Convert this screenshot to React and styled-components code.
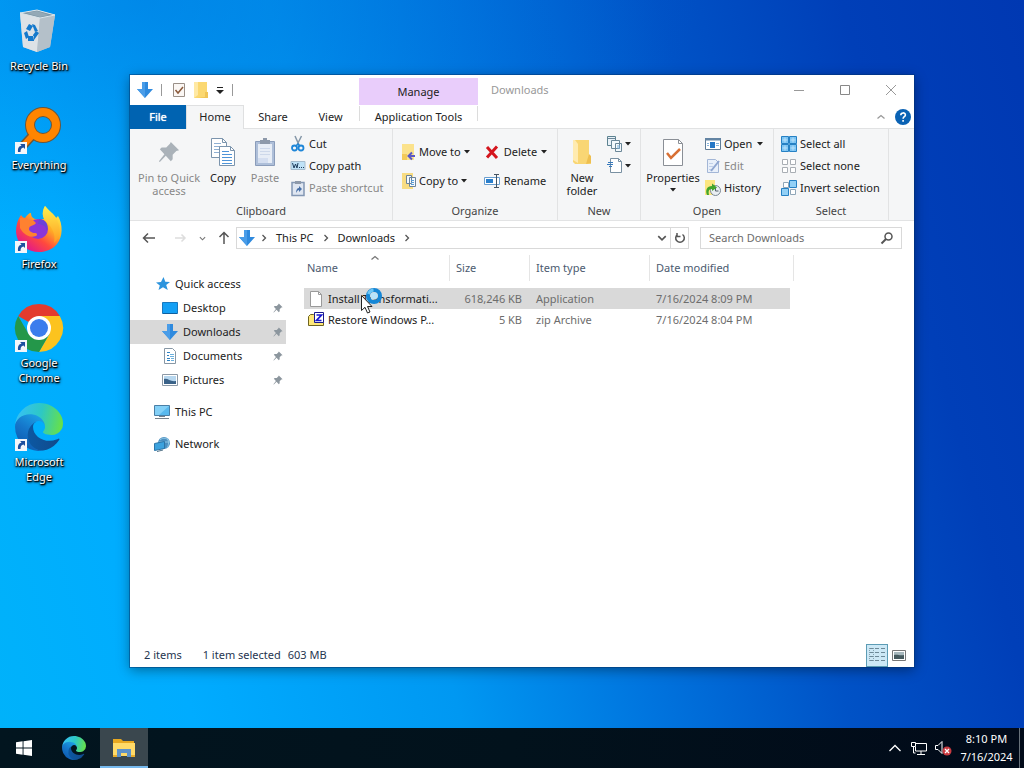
import React from "react"

import styled, { createGlobalStyle } from "styled-components"

const GlobalStyle = createGlobalStyle`
  * {
    box-sizing: border-box;
  }

  body {
    margin: 0;
    overflow: hidden;
    font-family: "Noto Sans", "Open Sans", sans-serif;
    font-size: 11px;
    line-height: 16px;
    color: #222;
  }

  button, input {
    font: inherit;
    color: inherit;
    border: 0;
    padding: 0;
    background: none;
  }

  a {
    color: inherit;
    text-decoration: none;
  }

  svg {
    display: block;
    flex-shrink: 0;
    overflow: visible;
  }
`

/* ---------- desktop ---------- */

const Screen = styled.div`
  display: flex;
  flex-direction: column;
  height: 100vh;
`

const Desktop = styled.main`
  position: relative;
  flex: 1;
  min-height: 0;
  background:
    radial-gradient(ellipse 560px 240px at 14% 0%, rgba(0, 100, 210, 0.4), rgba(0, 100, 210, 0) 100%),
    linear-gradient(75deg, #00b2fa 0%, #00acff 16%, #0098f2 38%, #0074de 54%, #0052c6 70%, #003fb8 85%, #0038b2 100%);
`

const Shortcuts = styled.nav`
  display: flex;
  flex-direction: column;
  width: 78px;
  padding-top: 7px;
`

const Shortcut = styled.a`
  display: flex;
  flex-direction: column;
  align-items: center;
  gap: 3px;
  height: 99px;
  line-height: 15px;
  text-align: center;
  color: #fff;
  text-shadow: 1px 1px 1px #000, 0 1px 2px #000, 1px 1px 3px #000;
`

const ShortcutLabel = styled.span`
  width: 68px;
`

/* ---------- window ---------- */

const Window = styled.section`
  position: absolute;
  top: 75px;
  right: 110px;
  bottom: 61px;
  left: 130px;
  display: flex;
  flex-direction: column;
  background: #fff;
  outline: 1px solid rgba(0, 50, 110, 0.45);
  box-shadow: 0 3px 12px rgba(0, 0, 0, 0.4);
`

const TitleBar = styled.header`
  display: flex;
  height: 30px;
`

const QuickTools = styled.div`
  display: flex;
  align-items: center;
  gap: 8px;
  width: 229px;
  padding-left: 7px;
`

const ToolDivider = styled.span`
  width: 1px;
  height: 12px;
  background: #999;
`

const ContextTab = styled.div`
  width: 119px;
  margin-top: 3px;
  line-height: 27px;
  text-align: center;
  background: #e9cdfb;
`

const WindowTitle = styled.h1`
  flex: 1;
  margin: 0;
  padding-left: 13px;
  font-size: 11px;
  font-weight: 400;
  line-height: 30px;
  color: #999;
`

const WindowButton = styled.button`
  display: flex;
  align-items: center;
  justify-content: center;
  width: 46px;
  height: 29px;
`

const Tabs = styled.div`
  display: flex;
  height: 24px;
  border-bottom: 1px solid #e1e2e3;
`

const Tab = styled.button`
  width: ${props => props.$width || 56}px;
  height: 24px;
  padding-bottom: 2px;
  border: 1px solid transparent;
  border-bottom: 0;

  ${props => props.$file && `
    color: #fff;
    background: #0063b1;
    text-shadow: 0 0 1px #fff;
  `}
  ${props => props.$active && `
    border-color: #dfe0e1;
    background: #f5f6f7;
  `}
  ${props => props.$context && `
    border-image: linear-gradient(#dcdcdc 16px, transparent 16px) 0 1;
  `}
`

const TabsEnd = styled.div`
  display: flex;
  align-items: center;
  gap: 10px;
  margin-left: auto;
  padding-right: 3px;
`

/* ---------- ribbon ---------- */

const Ribbon = styled.div`
  display: flex;
  height: 92px;
  background: #f5f6f7;
  border-bottom: 1px solid #e2e3e4;
`

const Group = styled.section`
  display: flex;
  flex-direction: column;
  width: ${props => props.$width}px;
  border-right: 1px solid #e2e3e4;
`

const GroupBody = styled.div`
  display: flex;
  flex: 1;
  padding: 4px 0 0 ${props => props.$pad || 6}px;
`

const GroupTitle = styled.h2`
  margin: 0;
  padding-bottom: 1px;
  font-size: 11px;
  font-weight: 400;
  line-height: 17px;
  text-align: center;
  color: #444;
`

const BigButton = styled.button`
  display: flex;
  flex-direction: column;
  align-items: center;
  width: ${props => props.$width}px;
  height: 66px;
  line-height: 13px;
  color: ${props => (props.$off ? "#888" : "#222")};
`

const BigIcon = styled.span`
  display: flex;
  align-items: center;
  justify-content: center;
  height: 38px;
`

const Stack = styled.div`
  display: flex;
  flex-direction: column;
  gap: ${props => props.$gap || 0}px;
  padding-top: ${props => props.$top || 0}px;
  padding-left: ${props => props.$left || 0}px;
`

const SmallButton = styled.button`
  display: flex;
  align-items: center;
  gap: ${props => props.$gap || 3}px;
  height: 22px;
  white-space: nowrap;
  color: ${props => (props.$off ? "#888" : "#222")};
`

/* ---------- address row ---------- */

const AddressRow = styled.div`
  display: flex;
  align-items: center;
  height: 34px;
  padding-right: 12px;
`

const NavButton = styled.button`
  display: flex;
  align-items: center;
  justify-content: center;
  width: ${props => props.$width}px;
  height: 22px;
`

const AddressBox = styled.div`
  display: flex;
  align-items: center;
  flex: 1;
  height: 22px;
  padding-left: 2px;
  border: 1px solid #d9d9d9;
`

const Crumb = styled.a`
  margin: 0 8px;
`

const Refresh = styled(NavButton)`
  border-left: 1px solid #d9d9d9;
  height: 20px;
`

const SearchBox = styled.label`
  display: flex;
  align-items: center;
  width: 202px;
  height: 22px;
  margin-left: 11px;
  padding: 0 8px;
  border: 1px solid #d9d9d9;

  input {
    flex: 1;
    min-width: 0;
    outline: 0;
  }

  input::placeholder {
    color: #6d6d6d;
    opacity: 1;
  }
`

/* ---------- body ---------- */

const Body = styled.div`
  display: flex;
  flex: 1;
  min-height: 0;
`

const Tree = styled.nav`
  width: 156px;
  padding-top: 17px;
`

const TreeItem = styled.a`
  display: flex;
  align-items: center;
  gap: 5px;
  height: 24px;
  margin-top: ${props => (props.$spaced ? 8 : 0)}px;
  padding: 0 3px 0 ${props => (props.$nested ? 32 : 24)}px;
  background: ${props => (props.$current ? "#d9d9d9" : "none")};

  span {
    flex: 1;
  }
`

const Files = styled.div`
  flex: 1;
  padding-left: 18px;
`

const FileTable = styled.table`
  table-layout: fixed;
  width: 490px;
  border-collapse: separate;
  border-spacing: 0;

  th {
    position: relative;
    height: 26px;
    padding: 0 6px;
    border-right: 1px solid #e5e5e5;
    font-weight: 400;
    text-align: left;
    color: #4c5b70;
  }

  th:first-child {
    padding-left: 3px;
  }

  tbody::before {
    content: "";
    display: block;
    height: 7px;
  }

  td {
    height: 21px;
    padding: 0 6px;
    white-space: nowrap;
    color: #6d6d6d;
  }

  td:first-child {
    padding-left: 4px;
    color: #222;
  }

  td:nth-child(2) {
    padding-right: 8px;
    text-align: right;
  }

  tr[aria-selected="true"] td:not(:last-child) {
    background: #d9d9d9;
  }
`

const SortMark = styled.span`
  position: absolute;
  top: -1px;
  left: 67px;
`

const FileName = styled.span`
  display: flex;
  align-items: center;
  gap: 4px;
`

const StatusBar = styled.footer`
  display: flex;
  align-items: center;
  height: 24px;
  padding: 0 4px 0 14px;
  color: #26354f;
`

const StatusText = styled.span`
  margin-right: ${props => props.$gap}px;
`

const ViewButtons = styled.div`
  display: flex;
  margin-left: auto;
`

const ViewButton = styled.button`
  display: flex;
  align-items: center;
  justify-content: center;
  width: 22px;
  height: 23px;
  border: 1px solid ${props => (props.$active ? "#5c9cb5" : "transparent")};
  background: ${props => (props.$active ? "#cce8f6" : "none")};
`

const Pointer = styled.div`
  position: absolute;
  top: 286px;
  left: 360px;
`

/* ---------- taskbar ---------- */

const Taskbar = styled.footer`
  display: flex;
  height: 40px;
  color: #fff;
  background: linear-gradient(90deg, #02151f, #02121c 50%, #010a19);
`

const TaskButton = styled.button`
  display: flex;
  align-items: center;
  justify-content: center;
  width: ${props => props.$width || 48}px;
  height: 40px;
  border-bottom: 2px solid ${props => (props.$open ? "#76b9ed" : "transparent")};
  border-top: 2px solid transparent;
  background: ${props => (props.$open ? "#3a474e" : "none")};
`

const Tray = styled.div`
  display: flex;
  align-items: center;
  margin-left: auto;
  padding-right: 4px;
`

const Clock = styled.time`
  width: 66px;
  height: 40px;
  padding-top: 2px;
  border-right: 1px solid #68717a;
  line-height: 18px;
  text-align: center;
`

/* ---------- icons ---------- */

const Svg = ({ w = 16, h = w, box, children }) => (
  <svg width={w} height={h} viewBox={box || `0 0 ${w} ${h}`} fill="none" aria-hidden="true">
    {children}
  </svg>
)

const LinkBadge = () => (
  <g>
    <path d="M0 36h12v12H0z" fill="#f4f6fa" />
    <path d="M3 46c-.4-4 1-6 3.500-6.200L5.200 38H10v5L8.500 41.600C6.500 42 5.500 43 5.500 46z" fill="#1d4f9f" />
  </g>
)

const BinIcon = () => (
  <Svg w={48}>
    <path d="M5 6 22 3l18 5-5 32-13 5-14-5z" fill="#c3cdd4" />
    <path d="M5 6 25 10l-3 35-14-5z" fill="#dde2e6" />
    <path d="m25 10 15-2-5 32-13 5z" fill="#b4c0c9" />
    <path d="M5 6 22 3l18 5-15 3z" fill="#7d95a5" stroke="#dbe6ec" />
    <path d="m11 6 11-2 12 4-9 2z" fill="#94a9b6" />
    <path d="m11 22 3-5 4 2-3 5zM17 17l3 1 3 6-3 1zM9 26l3-2 2 6-3 2zM13 34v-5h6v5zM19 33l5-7-3-2-3 4z" fill="#1479cc" />
  </Svg>
)

const EverythingIcon = () => (
  <Svg w={48}>
    <path d="m17 30-11 12" stroke="#6f5638" strokeWidth="9" />
    <circle cx="28" cy="19" r="13" stroke="#6f5638" strokeWidth="10" />
    <path d="M18 29 6 42" stroke="#ff7f00" strokeWidth="6" />
    <circle cx="28" cy="19" r="13" stroke="#ff8500" strokeWidth="8" />
    <LinkBadge />
  </Svg>
)

const FirefoxIcon = () => (
  <Svg w={48}>
    <defs>
      <linearGradient id="fox" x1="40" y1="6" x2="10" y2="44" gradientUnits="userSpaceOnUse">
        <stop offset="0" stopColor="#ffe94a" />
        <stop offset="0.35" stopColor="#ffae25" />
        <stop offset="0.65" stopColor="#ff4a3d" />
        <stop offset="1" stopColor="#e01590" />
      </linearGradient>
      <linearGradient id="flame" x1="0" y1="0" x2="0" y2="1">
        <stop offset="0" stopColor="#fff04e" />
        <stop offset="1" stopColor="#ff9b20" />
      </linearGradient>
    </defs>
    <path d="M6 10c1 2 3 3 4 3 2-3 4-5 6-5 0 3 1 5 4 6h10c-3-3-3-8 0-13 4 5 9 8 11 12l2-2c5 8 5 21-1 28C35 48 19 50 9 42-1 35-1 20 6 10z" fill="url(#fox)" />
    <path d="M30 1c4 5 9 8 11 12 5 9 5 20-2 25 2-9-2-16-7-20-4-4-6-9-2-17z" fill="url(#flame)" />
    <circle cx="23" cy="24" r="10" fill="#8b35d8" />
    <path d="M24 14c7 0 10 6 8 12-1-5-5-7-9-7z" fill="#6a43d8" />
    <path d="M5 13c3 0 6 0 8 2 3-1 6 0 8 3-2 3-7 2-7 6 0 2 3 4 6 4 2 0 3 2 1 3-8 3-14-4-16-8z" fill="#ff8130" />
    <LinkBadge />
  </Svg>
)

const ChromeIcon = () => (
  <Svg w={48}>
    <path d="M24 24 3.200 12A24 24 0 0 1 44.800 12z" fill="#e33b2e" />
    <path d="M24 24V12h20.800A24 24 0 0 1 24 48L34.400 30z" fill="#fcc31e" />
    <path d="M3.200 12 13.600 30 24 34l10.400-4L24 48A24 24 0 0 1 3.200 12z" fill="#24974a" />
    <circle cx="24" cy="24" r="12" fill="#fff" />
    <circle cx="24" cy="24" r="9" fill="#3b7ded" />
    <LinkBadge />
  </Svg>
)

const EdgeMark = () => (
  <g transform="translate(-4.630 -4.920)">
    <defs>
      <linearGradient id="edgeDeep" x1="64" y1="180" x2="242" y2="180" gradientUnits="userSpaceOnUse">
        <stop offset="0" stopColor="#0c59a4" />
        <stop offset="1" stopColor="#114a8b" />
      </linearGradient>
      <linearGradient id="edgeMid" x1="140" y1="90" x2="50" y2="230" gradientUnits="userSpaceOnUse">
        <stop offset="0" stopColor="#1b9de2" />
        <stop offset="0.5" stopColor="#1577cb" />
        <stop offset="1" stopColor="#0f5fb4" />
      </linearGradient>
      <linearGradient id="edgeTop" x1="20" y1="80" x2="250" y2="130" gradientUnits="userSpaceOnUse">
        <stop offset="0" stopColor="#35c1f1" />
        <stop offset="0.5" stopColor="#2dc8c4" />
        <stop offset="1" stopColor="#66e04b" />
      </linearGradient>
    </defs>
    <path d="M235.680 195.460a93.730 93.730 0 0 1-10.540 4.710 101.870 101.870 0 0 1-35.900 6.460c-47.320 0-88.540-32.550-88.540-74.320A31.480 31.480 0 0 1 117.130 105c-42.800 1.800-53.800 46.400-53.800 72.530 0 73.880 68.090 81.370 82.760 81.370 7.910 0 19.840-2.300 27-4.560l1.310-.44a128.340 128.340 0 0 0 66.600-52.800 4 4 0 0 0-5.320-5.640Z" fill="url(#edgeDeep)" />
    <path d="M110.340 246.340A79.200 79.200 0 0 1 87.600 225a80.720 80.720 0 0 1 29.530-120c3.120-1.470 8.450-4.130 15.540-4a32.350 32.350 0 0 1 25.690 13 31.880 31.880 0 0 1 6.360 18.660c0-.21 24.460-79.600-80-79.600-43.900 0-80 41.660-80 78.210a130.150 130.150 0 0 0 12.110 56 128 128 0 0 0 156.380 67.110 75.550 75.550 0 0 1-62.780-8Z" fill="url(#edgeMid)" />
    <path d="M156.940 153.780c-.81 1.050-3.300 2.500-3.300 5.660 0 2.610 1.700 5.120 4.720 7.230 14.380 10 41.490 8.680 41.560 8.680a59.560 59.560 0 0 0 30.270-8.350A61.380 61.380 0 0 0 260.660 114c.26-22.410-8-37.310-11.340-43.910C228.130 28.760 182.350 5 132.630 5A128 128 0 0 0 4.630 131.200c.48-36.540 36.800-66.050 80-66.050 3.500 0 23.460.34 42 10.070 16.340 8.580 24.900 18.940 30.850 29.210 6.180 10.670 7.280 24.150 7.280 29.520s-2.740 13.330-7.800 19.830Z" fill="url(#edgeTop)" />
  </g>
)

const EdgeIcon = () => (
  <Svg w={48}>
    <g transform="scale(.1875)"><EdgeMark /></g>
    <LinkBadge />
  </Svg>
)

const DownArrow = () => (
  <Svg>
    <path d="M5 0h6v7h5L8 16 0 7h5z" fill="#2f8ade" />
    <path d="M5 0h3v16L0 7h5z" fill="#4a9de8" />
  </Svg>
)

const TaskIcon = () => (
  <Svg w={14} h={16}>
    <path d="M1.500 1.500h11v13h-11z" fill="#fbf7f4" stroke="#9a9088" />
    <path d="m3.500 8 2.500 3 5-6" stroke="#8a5a3c" strokeWidth="1.500" />
  </Svg>
)

const FolderIcon = ({ w = 14, h = 16 }) => (
  <Svg w={w} h={h} box="0 0 14 16">
    <path d="M0 0h13v16H0z" fill="#fbd871" />
    <path d="M0 0h4v13l-4 3z" fill="#ffe9a4" />
    <path d="M11 10h3v6H3l8-1z" fill="#f0c455" />
  </Svg>
)

const BigFolder = () => (
  <Svg w={20} h={26}>
    <path d="M1 1h16v19l2 1v4H3l-2-2z" fill="#f9d674" />
    <path d="M1 1h2l3 4v19l-5-3z" fill="#ffebb0" />
    <path d="M17 15l2 2v7l-5 1z" fill="#eebf50" />
  </Svg>
)

const MenuLine = () => (
  <Svg w={8}>
    <path d="M1 1.500h6" stroke="#222" />
    <path d="M0 4h8L4 8z" fill="#222" />
  </Svg>
)

const Caret = () => (
  <Svg w={6} h={4}>
    <path d="M0 0h6L3 3.500z" fill="#222" />
  </Svg>
)

const Chevron = ({ dir = "right", color = "#555", size = 8 }) => {
  const paths = {
    right: "M2.500 1 5.500 4l-3 3",
    down: "M1 2.500l3 3 3-3",
    up: "M.500 5.500l3.500-3 3.500 3",
  }
  return (
    <Svg w={size} box="0 0 8 8">
      <path d={paths[dir]} stroke={color} strokeWidth="1.300" />
    </Svg>
  )
}

const PinShape = ({ size = 10, color = "#8c969e" }) => (
  <Svg w={size} box="0 0 24 24">
    <path d="M14 1l9 9-3 1-4 4v5l-2 2-5.500-6L2 23l-1-1 6-7.500L2 9l2-2h5l4-4z" fill={color} />
  </Svg>
)

const CopyIcon = () => (
  <Svg w={26} h={29}>
    <path d="M1.500.500h11l4 4v15h-15z" fill="#fff" stroke="#7b94ad" />
    <path d="M12.500.500v4h4" stroke="#7b94ad" />
    <path d="M4 5.500h7M4 8.500h10M4 11.500h10M4 14.500h6" stroke="#8fb0d3" />
    <path d="M9.500 8.500h11l4 4v15h-15z" fill="#fff" stroke="#7b94ad" />
    <path d="M20.500 8.500v4h4" stroke="#7b94ad" />
    <path d="M12 13.500h7M12 16.500h10M12 19.500h10M12 22.500h10M12 25.500h10" stroke="#4f94d8" />
  </Svg>
)

const PasteIcon = () => (
  <Svg w={22} h={30}>
    <path d="M1.500 4.500h19v24h-19z" fill="#aebfd9" stroke="#8a9cba" />
    <path d="M4 7h14v19H4z" fill="#e7edf6" />
    <path d="M4 21h10v5H4z" fill="#d4def0" />
    <path d="M6 3h3V1h4v2h3v4H6z" fill="#8d99aa" />
    <path d="M6 11.500h10M6 14.500h10M6 17.500h10" stroke="#cdd8ea" />
  </Svg>
)

const CutIcon = () => (
  <Svg w={14} h={16}>
    <path d="M4 0l4 9M10.500 0 6 9" stroke="#8597a8" strokeWidth="1.500" />
    <circle cx="3.500" cy="12" r="2.500" stroke="#1e86d8" strokeWidth="1.800" />
    <circle cx="10" cy="12" r="2.500" stroke="#1e86d8" strokeWidth="1.800" />
    <path d="m5 10 2-2 2 2" stroke="#1e86d8" strokeWidth="1.500" />
  </Svg>
)

const PathIcon = () => (
  <Svg w={14} h={10}>
    <path d="M0 .500h14v8H0z" fill="#bfe2f7" stroke="#a6bccd" />
    <path d="m1.500 2 1.500 5 1.500-4L6 7l1-5M8 6.500h1M10 6.500h1M12 6.500h1" stroke="#1f3d5c" />
  </Svg>
)

const PasteLinkIcon = () => (
  <Svg w={14} h={16}>
    <path d="M1 2.500h12v13H1z" fill="#dfe6f1" stroke="#8397b4" strokeWidth="1.500" />
    <path d="M4 1h6v3H4z" fill="#8d99aa" />
    <path d="M5 13c0-3 1-5 3-5V6l3 3-3 3v-2c-1 0-2 1-3 3z" fill="#4870a8" />
  </Svg>
)

const MoveIcon = () => (
  <Svg w={14} h={16}>
    <path d="M0 0h12v16H0z" fill="#fbe28c" />
    <path d="M0 10h5v6H0z" fill="#f3ca58" />
    <path d="M13 12H7m3-3.500L6.500 12l3.500 3.500" stroke="#5b58c4" strokeWidth="2" />
  </Svg>
)

const CopyToIcon = () => (
  <Svg w={14} h={16}>
    <path d="M0 0h11v16H0z" fill="#f8dc82" />
    <path d="M4.500 2.500h5v8h-5zM7.500 4.500h6v9h-6z" fill="#f4f9fd" stroke="#6a8299" />
    <path d="M9 7.500h3M9 9.500h3M9 11.500h3" stroke="#5b9fd8" />
  </Svg>
)

const DeleteIcon = () => (
  <Svg w={16} h={14}>
    <path d="M3 2 13 13M13 1.500 3 12.500" stroke="#d4151d" strokeWidth="3" />
  </Svg>
)

const RenameIcon = () => (
  <Svg w={16} h={14}>
    <path d="M12 3.500H.500v7H12M13 3.500h2.500v7H13" fill="#fff" stroke="#6a9fd0" />
    <path d="M2 5h7v4H2z" fill="#2a7fcc" />
    <path d="M10 .500h5M10 13.500h5M12.500 1v12" stroke="#445463" />
  </Svg>
)

const NewItemIcon = () => (
  <Svg w={16}>
    <path d="M.500.500h8v9h-8z" fill="#e8f1f8" stroke="#5c8290" />
    <path d="M.500 2.500h8M4.500 4.500h8v8h-8zM8.500 7.500h6v8h-6z" fill="#f4f9fc" stroke="#6b8798" />
    <path d="M10 10h3M10 12h3" stroke="#7cb1dc" />
  </Svg>
)

const EasyAccessIcon = () => (
  <Svg w={16}>
    <path d="M3.500.500h8l3 3v11h-11z" fill="#fff" stroke="#7990a2" />
    <path d="M11.500.500v3h3" stroke="#7990a2" />
    <path d="M0 6.500h6M1 4.500h5M2 8.500h3" stroke="#3679bd" />
  </Svg>
)

const PropertiesIcon = () => (
  <Svg w={22} h={29}>
    <path d="M1.500 1.500h15l4 4v22h-19z" fill="#fff" stroke="#8a8f96" />
    <path d="M16.500 1.500v4h4" stroke="#8a8f96" />
    <path d="m5 15 4 5 9-9" stroke="#d87034" strokeWidth="2.500" />
  </Svg>
)

const OpenIcon = () => (
  <Svg w={16} h={12}>
    <path d="M.500.500h15v11H.500z" fill="#fff" stroke="#5f7c97" />
    <path d="M0 0h16v2.500H0z" fill="#6384a3" />
    <path d="M5 4h5v6H5z" fill="#2477c6" />
    <path d="M2 5.500h2M2 7.500h2M11 5.500h3M11 7.500h3" stroke="#86b4dc" />
  </Svg>
)

const EditIcon = () => (
  <Svg w={16}>
    <path d="M2.500 1.500h8l3 3v10h-11z" fill="#e9f0fa" stroke="#a3b6d6" />
    <path d="M4 5.500h4M4 8.500h4M4 11.500h4" stroke="#c1d0e8" />
    <path d="m6 13 8-10" stroke="#8fa6d0" strokeWidth="2" />
  </Svg>
)

const HistoryIcon = () => (
  <Svg w={16}>
    <path d="M0 0h10v15H0z" fill="#fbe680" />
    <circle cx="10.500" cy="10.500" r="5" fill="#e9eef2" stroke="#7b8894" />
    <path d="M10.500 8v3h3" stroke="#55616d" />
    <path d="M2 15c-2-5 0-9 5-9V3.500l5 4-5 3.500V9c-3 0-4 2-3 6z" fill="#43a52c" />
  </Svg>
)

const cells = [[0.5, 0.5], [8.5, 0.5], [0.5, 8.5], [8.5, 8.5]]

const SelectAllIcon = () => (
  <Svg>
    {cells.map(([x, y]) => (
      <g key={`${x}-${y}`}>
        <path d={`M${x} ${y}h7v7h-7z`} fill="#7cc4f3" stroke="#2681c4" />
        <path d={`M${x + 3.500} ${y + 1}v5M${x + 1} ${y + 3.500}h5`} stroke="#b8e0fa" />
      </g>
    ))}
  </Svg>
)

const SelectNoneIcon = () => (
  <Svg>
    {cells.map(([x, y]) => (
      <path key={`${x}-${y}`} d={`M${x + 1} ${y + 1}h5v5h-5z`} fill="#fff" stroke="#a9aeb4" />
    ))}
  </Svg>
)

const InvertIcon = () => (
  <Svg>
    <path d="M2.500 2.500h5v5h-5zM9.500 9.500h5v5h-5z" fill="#fff" stroke="#8fa6b8" />
    <path d="M8.500.500h7v7h-7zM.500 8.500h7v7h-7z" fill="#92d0f6" stroke="#2681c4" />
  </Svg>
)

const HelpIcon = () => (
  <Svg>
    <circle cx="8" cy="8" r="8" fill="#0a62b4" />
    <path d="M5.800 6.200c0-3 4.600-3 4.600-.2 0 1.700-2.300 1.800-2.300 3.700M8.100 11v1.800" stroke="#fff" strokeWidth="1.600" />
  </Svg>
)

const ArrowIcon = ({ d, color = "#555" }) => (
  <Svg w={14}>
    <path d={d} stroke={color} strokeWidth="1.500" />
  </Svg>
)

const RefreshIcon = () => (
  <Svg w={12}>
    <path d="M8.500 2.500a4.300 4.300 0 1 1-5 0M3 1v3.500h3.500" stroke="#555" strokeWidth="1.500" />
  </Svg>
)

const SearchIcon = () => (
  <Svg w={12}>
    <circle cx="7.500" cy="4.500" r="3.500" stroke="#555" strokeWidth="1.500" />
    <path d="M5 7 .500 11.500" stroke="#555" strokeWidth="2" />
  </Svg>
)

const StarIcon = () => (
  <Svg>
    <path d="m9.500 1 1.800 4.700 4.700.3-3.800 3 1.600 5-4.800-2.800L4.500 14l1.300-4.600L2 6.500l5-.5z" fill="#2c94dd" />
  </Svg>
)

const DesktopIcon = () => (
  <Svg w={16} h={12}>
    <path d="M.500.500h15v11H.500z" fill="#14a0f5" stroke="#1879c0" />
    <path d="M1 11.500h14" stroke="#0f5f9e" />
  </Svg>
)

const DocumentIcon = () => (
  <Svg w={16}>
    <path d="M2.500.500h8l3 3v12h-11z" fill="#fff" stroke="#8797a5" />
    <path d="M5 4.500h3M5 7.500h2M5 10.500h3M5 12.500h3" stroke="#2f83c4" />
    <path d="M8 6.500h4M8 8.500h4M9 10.500h3M9 12.500h3" stroke="#6bb0dd" />
  </Svg>
)

const PicturesIcon = () => (
  <Svg w={16} h={12}>
    <path d="M.500.500h15v11H.500z" fill="#fff" stroke="#8c99a6" />
    <path d="M2 2h12v8H2z" fill="#b7d7ef" />
    <path d="M2 5c4-1 6 3 12 2v3H2z" fill="#3a6288" />
  </Svg>
)

const ComputerIcon = () => (
  <Svg w={16}>
    <path d="M.500 1.500h15v10H.500z" fill="#59b9ee" stroke="#4a7fa6" />
    <path d="M1 2h14L5 11H1z" fill="#83d0f7" />
    <path d="M5 12.500h6M1 14.500h14" stroke="#76828c" />
  </Svg>
)

const NetworkIcon = () => (
  <Svg w={16}>
    <circle cx="10" cy="7" r="6" fill="#4b8fc0" />
    <path d="M6 4c3-3 8-2 9 2M5 6h11M13 2c2 3 2 7 0 10" stroke="#8fc7e6" />
    <path d="m.500 7.500 10-2v7l-10 2z" fill="#3ca2de" stroke="#2c75a8" />
    <path d="m3 15.500 6-1.500" stroke="#547488" />
  </Svg>
)

const BlankFileIcon = () => (
  <Svg w={16}>
    <path d="M2.500.500h8l3 3v12h-11z" fill="#fff" stroke="#9a9a9a" />
    <path d="M10.500.500v3h3" stroke="#9a9a9a" />
  </Svg>
)

const ZipIcon = () => (
  <Svg w={16}>
    <path d="M.500 4.500l2-2h3l2 2h8v9h-15z" fill="#ffe879" stroke="#6e6420" />
    <path d="M6.500.500h9v10h-9z" fill="#fff" stroke="#1a1a8c" />
    <path d="M8.500 3h5l-5 5.500h5" stroke="#1616d0" strokeWidth="1.700" />
  </Svg>
)

const DetailsIcon = () => (
  <Svg w={18} h={16}>
    {[2, 6, 10, 14].map(y => (
      <path key={y} d={`M2 ${y - 0.5}h3M7 ${y - 0.5}h4M13 ${y - 0.5}h4`} stroke="#6d8998" />
    ))}
    <path d="M1.500 1v13M5.500 1v13" stroke="#84a2b0" strokeDasharray="1 1" />
  </Svg>
)

const ThumbsIcon = () => (
  <Svg w={14} h={11}>
    <path d="M.500.500h13v10H.500z" fill="#fff" stroke="#777" />
    <path d="M2 2h10v7H2z" fill="#a7b8bd" />
    <path d="M2 5c4-1 5 1 10 0v4H2z" fill="#465a5e" />
  </Svg>
)

const BusyPointer = () => (
  <Svg w={24} h={28}>
    <circle cx="14" cy="10" r="6" stroke="#1687d6" strokeWidth="4" />
    <circle cx="14" cy="10" r="3.500" fill="#b7e3fa" />
    <path d="M8.500 8a6 6 0 0 1 5-4" stroke="#6cc6f5" strokeWidth="3" />
    <path d="M1.500 9.500v15l3.500-3.200 2.500 5.700 2.500-1-2.500-5.500H12z" fill="#fff" stroke="#222" />
  </Svg>
)

const WindowsIcon = () => (
  <Svg>
    <path d="M0 2.300 6.600 1.300v6.300H0zM7.500 1.200 16 0v7.600H7.500zM0 8.500h6.600v6.300L0 13.800zM7.500 8.500H16V16l-8.500-1.200z" fill="#fff" />
  </Svg>
)

const ExplorerIcon = () => (
  <Svg w={22} h={18}>
    <path d="M0 0h8l2 2h11v7H0z" fill="#e8a820" />
    <path d="M0 4h22v13H0z" fill="#ffda68" />
    <path d="M4 10h14v8h-4v-4H8v4H4z" fill="#5e92c9" />
    <path d="M0 16h4v2H0zM18 16h4v2h-4z" fill="#e9ad2c" />
  </Svg>
)

const WiredIcon = () => (
  <Svg w={16} h={14}>
    <path d="M5 2.500h10.500v7.500H4.500V6M10 10v3M6 13.500h8M.500 1.500h4v4h-4zM2.500 5.500V12h2" stroke="#fff" />
  </Svg>
)

const MutedIcon = () => (
  <Svg w={17} h={16}>
    <path d="M1.500 5.500h2.500l4-4v12l-4-4H1.500z" stroke="#fff" />
    <circle cx="13" cy="11" r="4.500" fill="#c93a40" />
    <path d="m11 9 4 4m0-4-4 4" stroke="#fff" strokeWidth="1.300" />
  </Svg>
)

/* ---------- content ---------- */

const shortcuts = [
  { label: "Recycle Bin", Icon: BinIcon },
  { label: "Everything", Icon: EverythingIcon },
  { label: "Firefox", Icon: FirefoxIcon },
  { label: "Google Chrome", Icon: ChromeIcon },
  { label: "Microsoft Edge", Icon: EdgeIcon },
]

const places = [
  { label: "Quick access", Icon: StarIcon },
  { label: "Desktop", Icon: DesktopIcon, nested: true },
  { label: "Downloads", Icon: DownArrow, nested: true, current: true },
  { label: "Documents", Icon: DocumentIcon, nested: true },
  { label: "Pictures", Icon: PicturesIcon, nested: true },
  { label: "This PC", Icon: ComputerIcon, spaced: true },
  { label: "Network", Icon: NetworkIcon, spaced: true },
]

const files = [
  { name: "Install Transformati...", size: "618,246 KB", type: "Application", date: "7/16/2024 8:09 PM", Icon: BlankFileIcon, selected: true },
  { name: "Restore Windows P...", size: "5 KB", type: "zip Archive", date: "7/16/2024 8:04 PM", Icon: ZipIcon },
]

const RibbonBar = () => (
  <Ribbon>
    <Group $width={263}>
      <GroupBody>
        <BigButton $width={66} $off>
          <BigIcon><PinShape size={22} color="#aab2b9" /></BigIcon>
          Pin to Quick<br />access
        </BigButton>
        <BigButton $width={42}>
          <BigIcon><CopyIcon /></BigIcon>
          Copy
        </BigButton>
        <BigButton $width={42} $off>
          <BigIcon><PasteIcon /></BigIcon>
          Paste
        </BigButton>
        <Stack $left={5}>
          <SmallButton $gap={4}><CutIcon />Cut</SmallButton>
          <SmallButton $gap={4}><PathIcon />Copy path</SmallButton>
          <SmallButton $gap={4} $off><PasteLinkIcon />Paste shortcut</SmallButton>
        </Stack>
      </GroupBody>
      <GroupTitle>Clipboard</GroupTitle>
    </Group>

    <Group $width={165}>
      <GroupBody $pad={9}>
        <Stack $top={8} $gap={7}>
          <SmallButton><MoveIcon />Move to<Caret /></SmallButton>
          <SmallButton><CopyToIcon />Copy to<Caret /></SmallButton>
        </Stack>
        <Stack $top={8} $gap={7} $left={14}>
          <SmallButton $gap={4}><DeleteIcon />Delete<Caret /></SmallButton>
          <SmallButton $gap={4}><RenameIcon />Rename</SmallButton>
        </Stack>
      </GroupBody>
      <GroupTitle>Organize</GroupTitle>
    </Group>

    <Group $width={83}>
      <GroupBody $pad={3}>
        <BigButton $width={42}>
          <BigIcon><BigFolder /></BigIcon>
          New<br />folder
        </BigButton>
        <Stack $left={4}>
          <SmallButton $gap={2} aria-label="New item"><NewItemIcon /><Caret /></SmallButton>
          <SmallButton $gap={2} aria-label="Easy access"><EasyAccessIcon /><Caret /></SmallButton>
        </Stack>
      </GroupBody>
      <GroupTitle>New</GroupTitle>
    </Group>

    <Group $width={133}>
      <GroupBody $pad={4}>
        <BigButton $width={56}>
          <BigIcon><PropertiesIcon /></BigIcon>
          Properties
          <Stack $top={4}><Caret /></Stack>
        </BigButton>
        <Stack $left={4}>
          <SmallButton>
            <OpenIcon />Open<Stack $left={2}><Caret /></Stack>
          </SmallButton>
          <SmallButton $off><EditIcon />Edit</SmallButton>
          <SmallButton><HistoryIcon />History</SmallButton>
        </Stack>
      </GroupBody>
      <GroupTitle>Open</GroupTitle>
    </Group>

    <Group $width={115}>
      <GroupBody $pad={7}>
        <Stack>
          <SmallButton><SelectAllIcon />Select all</SmallButton>
          <SmallButton><SelectNoneIcon />Select none</SmallButton>
          <SmallButton><InvertIcon />Invert selection</SmallButton>
        </Stack>
      </GroupBody>
      <GroupTitle>Select</GroupTitle>
    </Group>
  </Ribbon>
)

const Explorer = () => (
  <Window>
    <TitleBar>
      <QuickTools>
        <DownArrow />
        <ToolDivider />
        <Stack $left={2}><TaskIcon /></Stack>
        <FolderIcon />
        <MenuLine />
        <ToolDivider />
      </QuickTools>
      <ContextTab>Manage</ContextTab>
      <WindowTitle>Downloads</WindowTitle>
      <WindowButton aria-label="Minimize">
        <Svg w={10}><path d="M0 5.500h10" stroke="#999" /></Svg>
      </WindowButton>
      <WindowButton aria-label="Maximize">
        <Svg w={10}><path d="M.500.500h9v9h-9z" stroke="#888" /></Svg>
      </WindowButton>
      <WindowButton aria-label="Close">
        <Svg w={10}><path d="m0 0 10 10M10 0 0 10" stroke="#999" /></Svg>
      </WindowButton>
    </TitleBar>

    <Tabs>
      <Tab $file>File</Tab>
      <Tab $active $width={58}>Home</Tab>
      <Tab $width={58}>Share</Tab>
      <Tab $width={57}>View</Tab>
      <Tab $context $width={119}>Application Tools</Tab>
      <TabsEnd>
        <Chevron dir="up" color="#999" />
        <HelpIcon />
      </TabsEnd>
    </Tabs>

    <RibbonBar />

    <AddressRow>
      <NavButton $width={38} aria-label="Back"><ArrowIcon d="M13 7H1.500M6 2.500 1.500 7 6 11.500" /></NavButton>
      <NavButton $width={24} aria-label="Forward"><ArrowIcon d="M2 7h10M8.500 3.500 12 7l-3.500 3.500" color="#ddd" /></NavButton>
      <NavButton $width={20} aria-label="Recent locations"><Chevron dir="down" color="#777" size={7} /></NavButton>
      <NavButton $width={24} aria-label="Up"><ArrowIcon d="M7 13V1.500M2.500 6 7 1.500 11.500 6" /></NavButton>
      <AddressBox>
        <DownArrow />
        <Stack $left={5}><Chevron /></Stack>
        <Crumb href="#this-pc">This PC</Crumb>
        <Chevron />
        <Crumb href="#downloads">Downloads</Crumb>
        <Chevron />
        <TabsEnd><Chevron dir="down" size={10} /></TabsEnd>
        <Refresh $width={18} aria-label="Refresh"><RefreshIcon /></Refresh>
      </AddressBox>
      <SearchBox>
        <input type="text" placeholder="Search Downloads" aria-label="Search Downloads" />
        <SearchIcon />
      </SearchBox>
    </AddressRow>

    <Body>
      <Tree>
        {places.map(({ label, Icon, nested, current, spaced }) => (
          <TreeItem key={label} href="#" $nested={nested} $current={current} $spaced={spaced}>
            <Icon />
            <span>{label}</span>
            {nested && <PinShape />}
          </TreeItem>
        ))}
      </Tree>
      <Files>
        <FileTable>
          <colgroup>
            <col width="146" />
            <col width="80" />
            <col width="120" />
            <col width="140" />
            <col width="4" />
          </colgroup>
          <thead>
            <tr>
              <th>Name<SortMark><Chevron dir="up" color="#777" /></SortMark></th>
              <th>Size</th>
              <th>Item type</th>
              <th colSpan="2">Date modified</th>
            </tr>
          </thead>
          <tbody>
            {files.map(({ name, size, type, date, Icon, selected }) => (
              <tr key={name} aria-selected={!!selected}>
                <td><FileName><Icon />{name}</FileName></td>
                <td>{size}</td>
                <td>{type}</td>
                <td>{date}</td>
                <td />
              </tr>
            ))}
          </tbody>
        </FileTable>
      </Files>
    </Body>

    <StatusBar>
      <StatusText $gap={21}>2 items</StatusText>
      <StatusText $gap={7}>1 item selected</StatusText>
      <StatusText $gap={0}>603 MB</StatusText>
      <ViewButtons>
        <ViewButton $active aria-label="Details"><DetailsIcon /></ViewButton>
        <ViewButton aria-label="Large icons"><ThumbsIcon /></ViewButton>
      </ViewButtons>
    </StatusBar>
  </Window>
)

const App = () => (
  <Screen>
    <GlobalStyle />
    <Desktop>
      <Shortcuts>
        {shortcuts.map(({ label, Icon }) => (
          <Shortcut key={label} href="#">
            <Icon />
            <ShortcutLabel>{label}</ShortcutLabel>
          </Shortcut>
        ))}
      </Shortcuts>
      <Explorer />
      <Pointer><BusyPointer /></Pointer>
    </Desktop>

    <Taskbar>
      <TaskButton aria-label="Start"><WindowsIcon /></TaskButton>
      <TaskButton $width={52} aria-label="Microsoft Edge"><Svg w={24} box="0 0 256 256"><EdgeMark /></Svg></TaskButton>
      <TaskButton $open aria-label="File Explorer"><ExplorerIcon /></TaskButton>
      <Tray>
        <TaskButton $width={24} aria-label="Show hidden icons">
          <Svg w={12} h={8}><path d="m.500 7 5.500-5.500L11.500 7" stroke="#fff" strokeWidth="1.300" /></Svg>
        </TaskButton>
        <TaskButton $width={24} aria-label="Network"><WiredIcon /></TaskButton>
        <TaskButton $width={23} aria-label="Volume"><MutedIcon /></TaskButton>
        <Clock>8:10 PM<br />7/16/2024</Clock>
      </Tray>
    </Taskbar>
  </Screen>
)

export default App
